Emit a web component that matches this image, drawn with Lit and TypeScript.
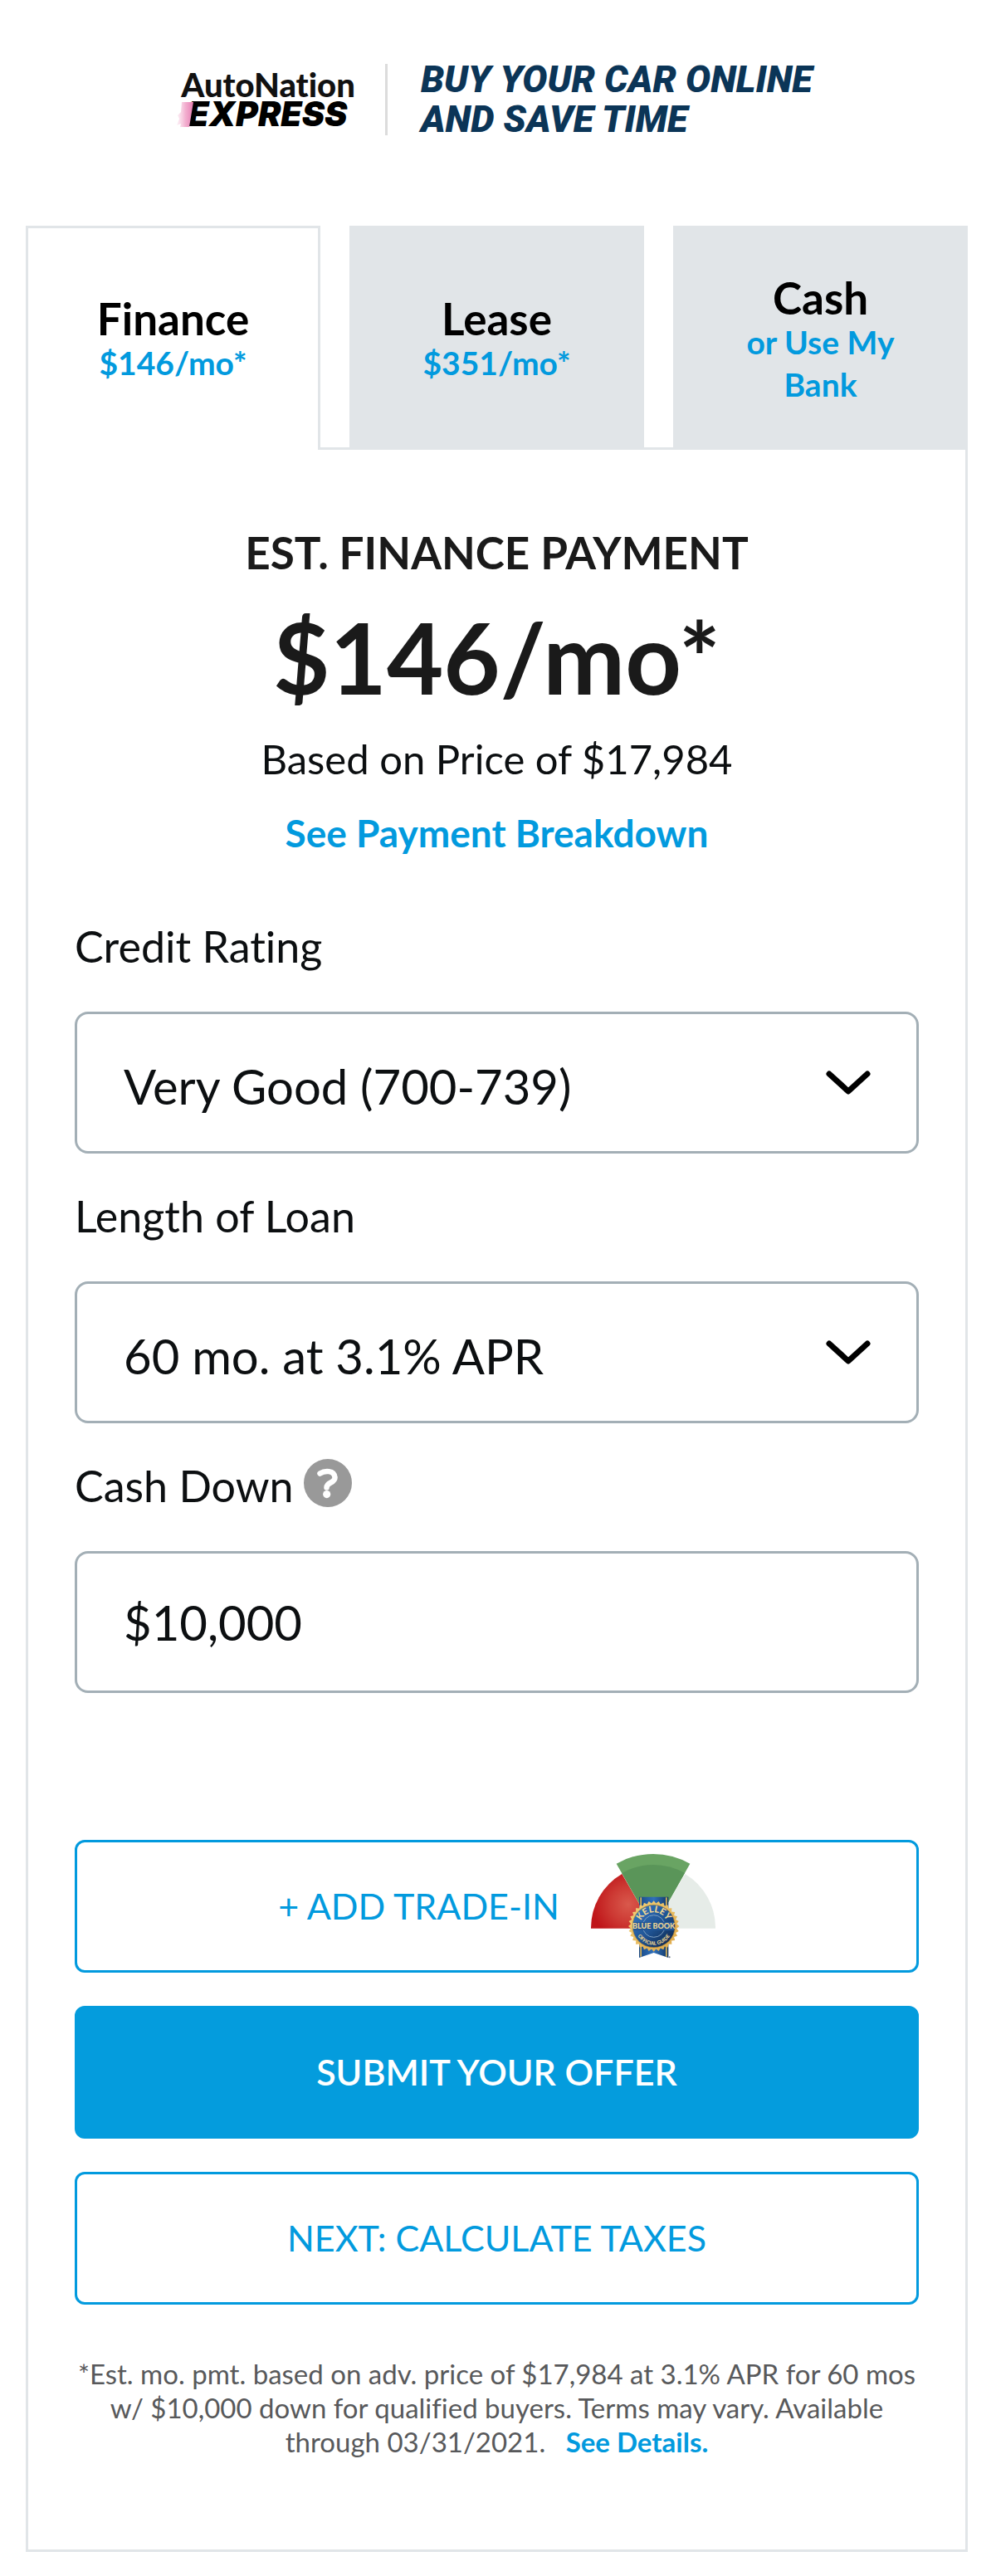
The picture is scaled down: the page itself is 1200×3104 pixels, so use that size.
import { LitElement, html, css, svg } from 'lit';
import { customElement, state } from 'lit/decorators.js';
import { classMap } from 'lit/directives/class-map.js';

interface Tab {
  id: string;
  title: string;
  note: string;
}

const TABS: Tab[] = [
  { id: 'finance', title: 'Finance', note: '$146/mo*' },
  { id: 'lease', title: 'Lease', note: '$351/mo*' },
  { id: 'cash', title: 'Cash', note: 'or Use My Bank' },
];

/* Points of the scalloped gold edge of the badge. */
const TEETH = 32;
const sealPoints = Array.from({ length: TEETH * 2 }, (_, i) => {
  const r = i % 2 ? 83 : 92;
  const a = (Math.PI * i) / TEETH;
  return `${(227 + r * Math.cos(a)).toFixed(1)},${(264 + r * Math.sin(a)).toFixed(1)}`;
}).join(' ');

const ribbonStripes = [178, 270].map(
  (x) => svg`<rect x=${x} y="160" width="5" height="214" fill="#d9b45a" />`,
);

@customElement('value-gauge')
export class ValueGauge extends LitElement {
  static styles = css`
    :host {
      display: block;
      width: 150px;
    }
    svg {
      display: block;
      width: 100%;
    }
    .seal-text {
      font-family: Lato, sans-serif;
      font-weight: 900;
      fill: #f0d793;
    }
  `;

  render() {
    return html`
      <svg viewBox="0 0 450 381" aria-hidden="true">
        <defs>
          <radialGradient id="red" gradientUnits="userSpaceOnUse" cx="135" cy="185" r="130">
            <stop offset="0" stop-color="#d9594c" />
            <stop offset="0.5" stop-color="#cd3a34" />
            <stop offset="1" stop-color="#bf1519" />
          </radialGradient>
          <linearGradient id="blue" x1="0" y1="0" x2="1" y2="1">
            <stop offset="0.1" stop-color="#3274bd" />
            <stop offset="0.5" stop-color="#205596" />
            <stop offset="0.9" stop-color="#0e2950" />
          </linearGradient>
          <linearGradient id="ribbon" x1="0" y1="0" x2="1" y2="0">
            <stop offset="0" stop-color="#1b4a86" />
            <stop offset="0.5" stop-color="#2f70bb" />
            <stop offset="1" stop-color="#123663" />
          </linearGradient>
          <linearGradient id="gold" x1="0" y1="0" x2="1" y2="1">
            <stop offset="0" stop-color="#f3d27a" />
            <stop offset="1" stop-color="#dda646" />
          </linearGradient>
          <path id="arc-top" d="M 177 264 A 50 50 0 0 1 277 264" />
          <path id="arc-bottom" d="M 159 264 A 68 68 0 0 0 295 264" />
        </defs>
        <path d="M226 272 L340 75 A227 227 0 0 1 450 272 Z" fill="#e6ece8" />
        <path d="M226 272 L112 75 A227 227 0 0 0 0 272 Z" fill="url(#red)" />
        <path d="M226 272 L92 38 A268 268 0 0 1 358 38 Z" fill="#69a463" />
        <path d="M226 272 L112 72 A229 229 0 0 1 339 72 Z" fill="#5a9559" />
        <path d="M174 158 H280 V378 L227 360 L174 378 Z" fill="url(#ribbon)" />
        ${ribbonStripes}
        <polygon points=${sealPoints} fill="url(#gold)" />
        <circle cx="227" cy="264" r="77" fill="url(#blue)" stroke="#b98a35" stroke-width="2" />
        <circle cx="227" cy="264" r="40" fill="none" stroke="#7f9fc0" stroke-width="3" />
        <rect x="154" y="249" width="146" height="30" fill="#205596" />
        <text class="seal-text" font-size="33" text-anchor="middle">
          <textPath href="#arc-top" startOffset="50%">KELLEY</textPath>
        </text>
        <text class="seal-text" font-size="27" text-anchor="middle" x="227" y="274">BLUE BOOK</text>
        <text class="seal-text" font-size="18" text-anchor="middle">
          <textPath href="#arc-bottom" startOffset="50%">OFFICIAL GUIDE</textPath>
        </text>
        <circle cx="284" cy="376" r="3" fill="#6d7a88" />
      </svg>
    `;
  }
}

@customElement('app-root')
export class AppRoot extends LitElement {
  @state() private active = 'finance';

  static styles = css`
    :host {
      --blue: #029ade;
      --line: #e1e5e8;
      --field: #a3afb6;
      display: block;
      box-sizing: border-box;
      padding: 72px 34px 29px 31px;
      background: #fff;
      color: #0c0f11;
      font-family: Lato, 'Noto Sans', sans-serif;
      font-variant-ligatures: none;
    }
    *,
    *::before,
    *::after {
      box-sizing: border-box;
    }
    h1,
    h2,
    p {
      margin: 0;
    }
    button,
    input,
    select {
      margin: 0;
      font: inherit;
      color: inherit;
    }
    button,
    select {
      cursor: pointer;
    }
    a {
      color: var(--blue);
      font-weight: 700;
      text-decoration: none;
    }

    .masthead {
      display: flex;
      align-items: center;
      justify-content: center;
      margin-bottom: 104px;
    }
    .brand {
      position: relative;
      display: grid;
      line-height: 35px;
      color: #111;
    }
    .brand-name {
      font-size: 40px;
      font-weight: 900;
    }
    .brand-line {
      padding-left: 8px;
      font: italic 900 41px/35px Inter, sans-serif;
      color: #000;
    }
    .streak {
      position: absolute;
      left: -6px;
      bottom: 0;
      width: 22px;
      height: 34px;
    }
    .rule {
      width: 3px;
      height: 86px;
      margin: 0 40px 0 36px;
      background: #dcdcdc;
    }
    .slogan {
      font: italic 900 45px/48px Roboto, sans-serif;
      color: #0b3557;
    }

    .tabs {
      display: grid;
      grid-template-columns: repeat(3, 1fr);
      gap: 35px;
    }
    .tab {
      display: flex;
      flex-direction: column;
      align-items: center;
      justify-content: center;
      min-height: 270px;
      padding: 2px 48px 0;
      border: 3px solid var(--line);
      border-bottom: 0;
      border-radius: 0;
      background: var(--line);
      font-weight: 700;
      text-align: center;
    }
    .tab.active {
      position: relative;
      background: #fff;
    }
    .tab-title {
      font-size: 53px;
      line-height: 56px;
      color: #000;
    }
    .tab-note {
      font-size: 39px;
      line-height: 51px;
      color: var(--blue);
    }

    .card {
      margin-top: -3px;
      padding: 92px 56px 109px;
      border: 3px solid var(--line);
    }
    .summary {
      display: grid;
      justify-items: center;
      margin-bottom: 76px;
      text-align: center;
      color: #1a1a1a;
    }
    .summary-title {
      font-size: 53px;
      line-height: 64px;
    }
    .price {
      margin: 22px 0 20px;
      font-size: 118px;
      line-height: 144px;
      font-weight: 700;
    }
    .basis {
      margin-bottom: 32px;
      font-size: 49px;
      line-height: 60px;
      color: #0c0f11;
    }
    .breakdown {
      font-size: 46px;
      line-height: 56px;
    }

    .fields {
      display: grid;
      gap: 43px;
    }
    .label-row {
      display: flex;
      gap: 12px;
      height: 64px;
      margin-bottom: 47px;
      font-size: 52px;
      line-height: 64px;
    }
    .help {
      width: 58px;
      height: 58px;
      padding: 0;
      border: 0;
      background: none;
    }
    .help svg {
      display: block;
    }
    .control {
      display: grid;
      align-items: center;
    }
    .control > * {
      grid-area: 1 / 1;
    }
    .input {
      width: 100%;
      height: 171px;
      padding: 0 56px;
      border: 3px solid var(--field);
      border-radius: 16px;
      background: #fff;
      font-size: 58px;
      outline: none;
      appearance: none;
    }
    select.input {
      padding-top: 8px;
    }
    .chevron {
      justify-self: end;
      width: 54px;
      height: 30px;
      margin-right: 58px;
      pointer-events: none;
    }

    .actions {
      display: grid;
      gap: 40px;
      margin: 177px 0 63px;
    }
    .action {
      display: flex;
      align-items: center;
      justify-content: center;
      gap: 38px;
      width: 100%;
      height: 160px;
      padding: 0 0 2px;
      border: 3px solid var(--blue);
      border-radius: 12px;
      background: #fff;
      font-size: 43px;
      color: var(--blue);
    }
    .action.primary {
      background: #049cdd;
      border-color: #049cdd;
      font-weight: 600;
      color: #fff;
    }
    .fine-print {
      font-size: 33px;
      line-height: 41px;
      text-align: center;
      color: #58595b;
    }
    .details {
      margin-left: 16px;
    }
  `;

  private renderSelect(id: string, label: string, options: string[]) {
    return html`
      <div>
        <div class="label-row"><label for=${id}>${label}</label></div>
        <div class="control">
          <select class="input" id=${id}>
            ${options.map((o) => html`<option>${o}</option>`)}
          </select>
          <svg class="chevron" viewBox="0 0 54 30" aria-hidden="true">
            <path
              d="M4 4 L27 25 L50 4"
              fill="none"
              stroke="#000"
              stroke-width="7"
              stroke-linecap="round"
              stroke-linejoin="round"
            />
          </svg>
        </div>
      </div>
    `;
  }

  render() {
    return html`
      <header class="masthead">
        <div class="brand">
          <svg class="streak" viewBox="0 0 22 34" aria-hidden="true">
            <defs>
              <linearGradient id="pink" x1="0" y1="0" x2="1" y2="0">
                <stop offset="0" stop-color="#f7cfe2" stop-opacity="0.3" />
                <stop offset="0.5" stop-color="#f3b2d1" />
                <stop offset="1" stop-color="#e77fb4" />
              </linearGradient>
            </defs>
            <path d="M7 2 H21 L16 32 H5 L6 28 L1 30 L4 22 L2 18 L6 14 Z" fill="url(#pink)" />
          </svg>
          <span class="brand-name">AutoNation</span>
          <span class="brand-line">EXPRESS</span>
        </div>
        <div class="rule"></div>
        <div class="slogan">BUY YOUR CAR ONLINE<br />AND SAVE TIME</div>
      </header>

      <div class="tabs" role="tablist">
        ${TABS.map(
          (t) => html`
            <button
              type="button"
              role="tab"
              class=${classMap({ tab: true, active: t.id === this.active })}
              aria-selected=${t.id === this.active ? 'true' : 'false'}
              @click=${() => (this.active = t.id)}
            >
              <span class="tab-title">${t.title}</span>
              <span class="tab-note">${t.note}</span>
            </button>
          `,
        )}
      </div>

      <main class="card">
        <section class="summary">
          <h1 class="summary-title">EST. FINANCE PAYMENT</h1>
          <p class="price">$146/mo*</p>
          <p class="basis">Based on Price of $17,984</p>
          <a class="breakdown" href="#breakdown">See Payment Breakdown</a>
        </section>

        <form @submit=${(e: Event) => e.preventDefault()}>
          <div class="fields">
            ${this.renderSelect('credit', 'Credit Rating', ['Very Good (700-739)'])}
            ${this.renderSelect('term', 'Length of Loan', ['60 mo. at 3.1% APR'])}
            <div>
              <div class="label-row">
                <label for="down">Cash Down</label>
                <button class="help" type="button" aria-label="About cash down">
                  <svg width="58" height="58" viewBox="0 0 58 58" aria-hidden="true">
                    <circle cx="29" cy="29" r="29" fill="#999" />
                    <path
                      d="M19.5 17.5 C25 14 37 13 37.5 22.5 C37.5 29.5 27.5 27.5 27.5 34.5"
                      fill="none"
                      stroke="#fff"
                      stroke-width="6.5"
                      stroke-linecap="round"
                      stroke-linejoin="round"
                    />
                    <circle cx="27.7" cy="42.6" r="4.6" fill="#fff" />
                  </svg>
                </button>
              </div>
              <div class="control">
                <input class="input" id="down" type="text" .value=${'$10,000'} />
              </div>
            </div>
          </div>

          <div class="actions">
            <button class="action" type="button">
              <span>+ ADD TRADE-IN</span>
              <value-gauge></value-gauge>
            </button>
            <button class="action primary" type="submit">SUBMIT YOUR OFFER</button>
            <button class="action" type="button">NEXT: CALCULATE TAXES</button>
          </div>
        </form>

        <p class="fine-print">
          *Est. mo. pmt. based on adv. price of $17,984 at 3.1% APR for 60 mos w/ $10,000 down for
          qualified buyers. Terms may vary. Available through 03/31/2021.
          <a class="details" href="#details">See Details.</a>
        </p>
      </main>
    `;
  }
}
